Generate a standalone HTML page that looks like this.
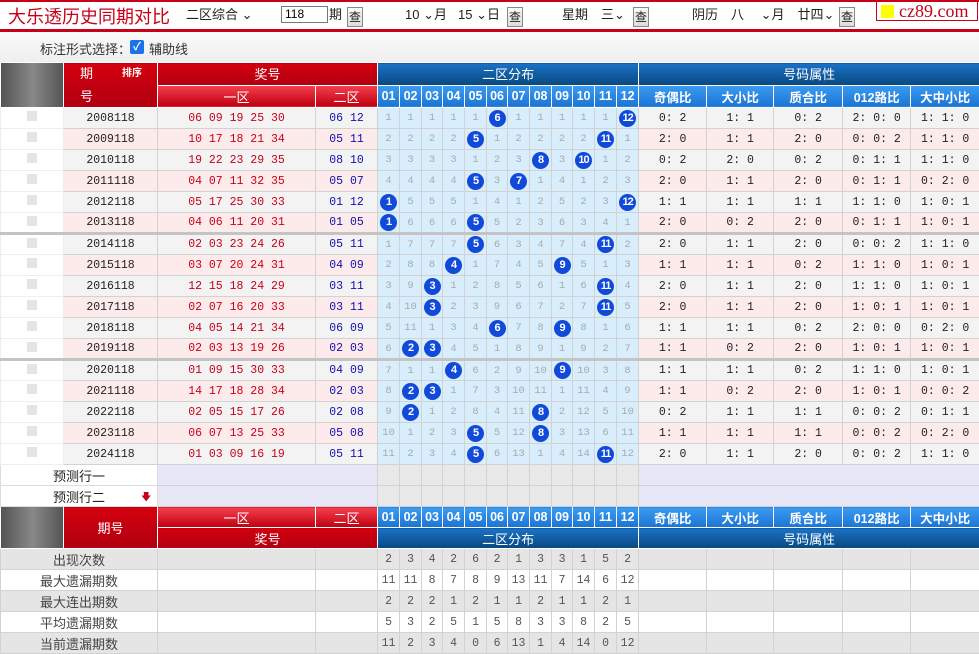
<!DOCTYPE html>
<html><head><meta charset="utf-8">
<style>
*{margin:0;padding:0;box-sizing:border-box}
body{width:979px;height:654px;overflow:hidden;background:#fff;font-family:"Liberation Sans","Noto Sans CJK SC",sans-serif;position:relative}
.top{position:absolute;left:0;top:0;width:979px;height:32px;border-top:2px solid #c8001a;border-bottom:3px solid #c8001a;background:#fff}
.title{position:absolute;left:8px;top:4px;font-size:18px;line-height:22px;color:#c8001a;white-space:nowrap}
.tt{position:absolute;top:5px;font-size:13px;line-height:16px;color:#222;white-space:nowrap}
.btn{position:absolute;top:5px;width:16px;height:20px;border:1px solid #888;background:linear-gradient(#fafafa,#ddd);font-size:12px;text-align:center;line-height:18px;color:#222}
.inp{position:absolute;left:281px;top:4px;width:47px;height:17px;border:1px solid #777;font-size:12px;padding-left:3px;line-height:15px}
.logo{position:absolute;left:876px;top:1px;width:102px;height:20px;border:1px solid #c8001a;background:#fff;font-family:"Liberation Serif",serif;font-size:18px;color:#c8001a;line-height:18px;padding-left:22px}
.logo b{position:absolute;left:4px;top:3px;width:13px;height:13px;background:#ff0}
.bar2{position:absolute;left:0;top:32px;width:979px;height:30px;background:linear-gradient(#fafafa,#efefef);font-size:13px;color:#333}
.cb{position:absolute;left:130px;top:8px;width:14px;height:14px;background:#1a73e8;border-radius:2px;color:#fff;font-size:11px;line-height:14px;text-align:center;font-weight:bold}
table{position:absolute;left:0;border-collapse:collapse;table-layout:fixed;width:979px}
td{border:1px solid #d2d2d2;height:21px;padding:0;text-align:center;font-size:11.5px;overflow:hidden;white-space:nowrap;color:#222;font-family:"Liberation Mono","Noto Sans CJK SC",monospace}
.hr{background:linear-gradient(#d4000f,#b00010);color:#fff;font-family:"Liberation Sans","Noto Sans CJK SC",sans-serif;font-size:13px;border-color:#fff}
.hr2{background:linear-gradient(#f54050,#c0000e);color:#fff;font-family:"Liberation Sans","Noto Sans CJK SC",sans-serif;font-size:13px;border-color:#fff}
.hb2{background:linear-gradient(#3b9cf0,#1b74d4);color:#fff;font-family:"Liberation Sans","Noto Sans CJK SC",sans-serif;font-size:12.5px;font-weight:bold;border-color:#fff}
.hbd{background:linear-gradient(#1a72c6,#08487f);color:#fff;font-family:"Liberation Sans","Noto Sans CJK SC",sans-serif;font-size:13px;border-color:#fff}
.dk{background:linear-gradient(90deg,#555,#888 50%,#555);border-color:#fff}
.ph{background:#fff;border-color:#eee}
.ph span{display:inline-block;width:10px;height:10px;background:#e4e4e4}
tr.g td{background:#f3f3f3}
tr.p td{background:#fdeaea}
tr.g td.ph,tr.p td.ph{background:#fff}
td.red{color:#c8001a}
td.blu{color:#1010b0}
tr td.b{background:#d8eefc;color:#aaa;font-size:10.5px}
td.b i{display:inline-block;width:17px;height:17px;border-radius:50%;background:#1149d8;color:#fff;font-style:normal;font-weight:bold;font-size:11px;line-height:17px;font-family:"Liberation Sans",sans-serif;letter-spacing:-1px}
tr.sep td{border-top:3px solid #c4c4c4}
.pr td{background:#e6e6f6;height:21px}
.pr td.pl{background:#fff;font-family:"Liberation Sans","Noto Sans CJK SC",sans-serif;font-size:13px;text-align:center;border-color:#ddd;position:relative}
.pr td.pg{background:#e8e8e8}
.st td{background:#e5e5e5;color:#555;font-size:11.5px}
.st.w td{background:#fff}
.st td.sl{font-family:"Liberation Sans","Noto Sans CJK SC",sans-serif;font-size:13px;color:#444}
</style></head><body>
<div class="top">
<div class="title">大乐透历史同期对比</div>
<div class="tt" style="left:186px">二区综合 ⌄</div>
<div class="inp">118</div>
<div class="tt" style="left:329px">期</div>
<div class="btn" style="left:347px">查</div>
<div class="tt" style="left:405px">10 ⌄月</div>
<div class="tt" style="left:458px">15 ⌄日</div>
<div class="btn" style="left:507px">查</div>
<div class="tt" style="left:562px">星期　三⌄</div>
<div class="btn" style="left:633px">查</div>
<div class="tt" style="left:692px">阴历　八　 ⌄月　廿四⌄</div>
<div class="btn" style="left:839px">查</div>
</div>
<div class="logo"><b></b>cz89.com</div>
<div class="bar2"><span style="position:absolute;left:40px;top:7px">标注形式选择：</span><div class="cb">✓</div><span style="position:absolute;left:149px;top:7px">辅助线</span></div>

<table style="top:62px">
<colgroup><col style="width:63px"><col style="width:94px"><col style="width:158px"><col style="width:62px">
<col style="width:22px"><col style="width:22px"><col style="width:21px"><col style="width:22px"><col style="width:22px"><col style="width:21px"><col style="width:22px"><col style="width:22px"><col style="width:21px"><col style="width:22px"><col style="width:22px"><col style="width:22px">
<col style="width:68px"><col style="width:67px"><col style="width:69px"><col style="width:68px"><col style="width:69px"></colgroup>
<tr><td class="dk" rowspan="2"></td><td class="hr" rowspan="2" style="text-align:left;padding-left:16px;line-height:21px">期　<span style="font-size:10px;font-weight:bold;position:relative;left:16px;top:-2px">排序</span><br>号</td><td class="hr" colspan="2">奖号</td><td class="hbd" colspan="12">二区分布</td><td class="hbd" colspan="5">号码属性</td></tr>
<tr><td class="hr2">一区</td><td class="hr2">二区</td><td class="hb2">01</td><td class="hb2">02</td><td class="hb2">03</td><td class="hb2">04</td><td class="hb2">05</td><td class="hb2">06</td><td class="hb2">07</td><td class="hb2">08</td><td class="hb2">09</td><td class="hb2">10</td><td class="hb2">11</td><td class="hb2">12</td><td class="hb2">奇偶比</td><td class="hb2">大小比</td><td class="hb2">质合比</td><td class="hb2">012路比</td><td class="hb2">大中小比</td></tr>
<tr class="g"><td class="ph"><span></span></td><td>2008118</td><td class="red">06&nbsp;09&nbsp;19&nbsp;25&nbsp;30</td><td class="blu">06&nbsp;12</td><td class="b">1</td><td class="b">1</td><td class="b">1</td><td class="b">1</td><td class="b">1</td><td class="b"><i>6</i></td><td class="b">1</td><td class="b">1</td><td class="b">1</td><td class="b">1</td><td class="b">1</td><td class="b"><i>12</i></td><td>0:&nbsp;2</td><td>1:&nbsp;1</td><td>0:&nbsp;2</td><td>2:&nbsp;0:&nbsp;0</td><td>1:&nbsp;1:&nbsp;0</td></tr>
<tr class="p"><td class="ph"><span></span></td><td>2009118</td><td class="red">10&nbsp;17&nbsp;18&nbsp;21&nbsp;34</td><td class="blu">05&nbsp;11</td><td class="b">2</td><td class="b">2</td><td class="b">2</td><td class="b">2</td><td class="b"><i>5</i></td><td class="b">1</td><td class="b">2</td><td class="b">2</td><td class="b">2</td><td class="b">2</td><td class="b"><i>11</i></td><td class="b">1</td><td>2:&nbsp;0</td><td>1:&nbsp;1</td><td>2:&nbsp;0</td><td>0:&nbsp;0:&nbsp;2</td><td>1:&nbsp;1:&nbsp;0</td></tr>
<tr class="g"><td class="ph"><span></span></td><td>2010118</td><td class="red">19&nbsp;22&nbsp;23&nbsp;29&nbsp;35</td><td class="blu">08&nbsp;10</td><td class="b">3</td><td class="b">3</td><td class="b">3</td><td class="b">3</td><td class="b">1</td><td class="b">2</td><td class="b">3</td><td class="b"><i>8</i></td><td class="b">3</td><td class="b"><i>10</i></td><td class="b">1</td><td class="b">2</td><td>0:&nbsp;2</td><td>2:&nbsp;0</td><td>0:&nbsp;2</td><td>0:&nbsp;1:&nbsp;1</td><td>1:&nbsp;1:&nbsp;0</td></tr>
<tr class="p"><td class="ph"><span></span></td><td>2011118</td><td class="red">04&nbsp;07&nbsp;11&nbsp;32&nbsp;35</td><td class="blu">05&nbsp;07</td><td class="b">4</td><td class="b">4</td><td class="b">4</td><td class="b">4</td><td class="b"><i>5</i></td><td class="b">3</td><td class="b"><i>7</i></td><td class="b">1</td><td class="b">4</td><td class="b">1</td><td class="b">2</td><td class="b">3</td><td>2:&nbsp;0</td><td>1:&nbsp;1</td><td>2:&nbsp;0</td><td>0:&nbsp;1:&nbsp;1</td><td>0:&nbsp;2:&nbsp;0</td></tr>
<tr class="g"><td class="ph"><span></span></td><td>2012118</td><td class="red">05&nbsp;17&nbsp;25&nbsp;30&nbsp;33</td><td class="blu">01&nbsp;12</td><td class="b"><i>1</i></td><td class="b">5</td><td class="b">5</td><td class="b">5</td><td class="b">1</td><td class="b">4</td><td class="b">1</td><td class="b">2</td><td class="b">5</td><td class="b">2</td><td class="b">3</td><td class="b"><i>12</i></td><td>1:&nbsp;1</td><td>1:&nbsp;1</td><td>1:&nbsp;1</td><td>1:&nbsp;1:&nbsp;0</td><td>1:&nbsp;0:&nbsp;1</td></tr>
<tr class="p"><td class="ph"><span></span></td><td>2013118</td><td class="red">04&nbsp;06&nbsp;11&nbsp;20&nbsp;31</td><td class="blu">01&nbsp;05</td><td class="b"><i>1</i></td><td class="b">6</td><td class="b">6</td><td class="b">6</td><td class="b"><i>5</i></td><td class="b">5</td><td class="b">2</td><td class="b">3</td><td class="b">6</td><td class="b">3</td><td class="b">4</td><td class="b">1</td><td>2:&nbsp;0</td><td>0:&nbsp;2</td><td>2:&nbsp;0</td><td>0:&nbsp;1:&nbsp;1</td><td>1:&nbsp;0:&nbsp;1</td></tr>
<tr class="g sep"><td class="ph"><span></span></td><td>2014118</td><td class="red">02&nbsp;03&nbsp;23&nbsp;24&nbsp;26</td><td class="blu">05&nbsp;11</td><td class="b">1</td><td class="b">7</td><td class="b">7</td><td class="b">7</td><td class="b"><i>5</i></td><td class="b">6</td><td class="b">3</td><td class="b">4</td><td class="b">7</td><td class="b">4</td><td class="b"><i>11</i></td><td class="b">2</td><td>2:&nbsp;0</td><td>1:&nbsp;1</td><td>2:&nbsp;0</td><td>0:&nbsp;0:&nbsp;2</td><td>1:&nbsp;1:&nbsp;0</td></tr>
<tr class="p"><td class="ph"><span></span></td><td>2015118</td><td class="red">03&nbsp;07&nbsp;20&nbsp;24&nbsp;31</td><td class="blu">04&nbsp;09</td><td class="b">2</td><td class="b">8</td><td class="b">8</td><td class="b"><i>4</i></td><td class="b">1</td><td class="b">7</td><td class="b">4</td><td class="b">5</td><td class="b"><i>9</i></td><td class="b">5</td><td class="b">1</td><td class="b">3</td><td>1:&nbsp;1</td><td>1:&nbsp;1</td><td>0:&nbsp;2</td><td>1:&nbsp;1:&nbsp;0</td><td>1:&nbsp;0:&nbsp;1</td></tr>
<tr class="g"><td class="ph"><span></span></td><td>2016118</td><td class="red">12&nbsp;15&nbsp;18&nbsp;24&nbsp;29</td><td class="blu">03&nbsp;11</td><td class="b">3</td><td class="b">9</td><td class="b"><i>3</i></td><td class="b">1</td><td class="b">2</td><td class="b">8</td><td class="b">5</td><td class="b">6</td><td class="b">1</td><td class="b">6</td><td class="b"><i>11</i></td><td class="b">4</td><td>2:&nbsp;0</td><td>1:&nbsp;1</td><td>2:&nbsp;0</td><td>1:&nbsp;1:&nbsp;0</td><td>1:&nbsp;0:&nbsp;1</td></tr>
<tr class="p"><td class="ph"><span></span></td><td>2017118</td><td class="red">02&nbsp;07&nbsp;16&nbsp;20&nbsp;33</td><td class="blu">03&nbsp;11</td><td class="b">4</td><td class="b">10</td><td class="b"><i>3</i></td><td class="b">2</td><td class="b">3</td><td class="b">9</td><td class="b">6</td><td class="b">7</td><td class="b">2</td><td class="b">7</td><td class="b"><i>11</i></td><td class="b">5</td><td>2:&nbsp;0</td><td>1:&nbsp;1</td><td>2:&nbsp;0</td><td>1:&nbsp;0:&nbsp;1</td><td>1:&nbsp;0:&nbsp;1</td></tr>
<tr class="g"><td class="ph"><span></span></td><td>2018118</td><td class="red">04&nbsp;05&nbsp;14&nbsp;21&nbsp;34</td><td class="blu">06&nbsp;09</td><td class="b">5</td><td class="b">11</td><td class="b">1</td><td class="b">3</td><td class="b">4</td><td class="b"><i>6</i></td><td class="b">7</td><td class="b">8</td><td class="b"><i>9</i></td><td class="b">8</td><td class="b">1</td><td class="b">6</td><td>1:&nbsp;1</td><td>1:&nbsp;1</td><td>0:&nbsp;2</td><td>2:&nbsp;0:&nbsp;0</td><td>0:&nbsp;2:&nbsp;0</td></tr>
<tr class="p"><td class="ph"><span></span></td><td>2019118</td><td class="red">02&nbsp;03&nbsp;13&nbsp;19&nbsp;26</td><td class="blu">02&nbsp;03</td><td class="b">6</td><td class="b"><i>2</i></td><td class="b"><i>3</i></td><td class="b">4</td><td class="b">5</td><td class="b">1</td><td class="b">8</td><td class="b">9</td><td class="b">1</td><td class="b">9</td><td class="b">2</td><td class="b">7</td><td>1:&nbsp;1</td><td>0:&nbsp;2</td><td>2:&nbsp;0</td><td>1:&nbsp;0:&nbsp;1</td><td>1:&nbsp;0:&nbsp;1</td></tr>
<tr class="g sep"><td class="ph"><span></span></td><td>2020118</td><td class="red">01&nbsp;09&nbsp;15&nbsp;30&nbsp;33</td><td class="blu">04&nbsp;09</td><td class="b">7</td><td class="b">1</td><td class="b">1</td><td class="b"><i>4</i></td><td class="b">6</td><td class="b">2</td><td class="b">9</td><td class="b">10</td><td class="b"><i>9</i></td><td class="b">10</td><td class="b">3</td><td class="b">8</td><td>1:&nbsp;1</td><td>1:&nbsp;1</td><td>0:&nbsp;2</td><td>1:&nbsp;1:&nbsp;0</td><td>1:&nbsp;0:&nbsp;1</td></tr>
<tr class="p"><td class="ph"><span></span></td><td>2021118</td><td class="red">14&nbsp;17&nbsp;18&nbsp;28&nbsp;34</td><td class="blu">02&nbsp;03</td><td class="b">8</td><td class="b"><i>2</i></td><td class="b"><i>3</i></td><td class="b">1</td><td class="b">7</td><td class="b">3</td><td class="b">10</td><td class="b">11</td><td class="b">1</td><td class="b">11</td><td class="b">4</td><td class="b">9</td><td>1:&nbsp;1</td><td>0:&nbsp;2</td><td>2:&nbsp;0</td><td>1:&nbsp;0:&nbsp;1</td><td>0:&nbsp;0:&nbsp;2</td></tr>
<tr class="g"><td class="ph"><span></span></td><td>2022118</td><td class="red">02&nbsp;05&nbsp;15&nbsp;17&nbsp;26</td><td class="blu">02&nbsp;08</td><td class="b">9</td><td class="b"><i>2</i></td><td class="b">1</td><td class="b">2</td><td class="b">8</td><td class="b">4</td><td class="b">11</td><td class="b"><i>8</i></td><td class="b">2</td><td class="b">12</td><td class="b">5</td><td class="b">10</td><td>0:&nbsp;2</td><td>1:&nbsp;1</td><td>1:&nbsp;1</td><td>0:&nbsp;0:&nbsp;2</td><td>0:&nbsp;1:&nbsp;1</td></tr>
<tr class="p"><td class="ph"><span></span></td><td>2023118</td><td class="red">06&nbsp;07&nbsp;13&nbsp;25&nbsp;33</td><td class="blu">05&nbsp;08</td><td class="b">10</td><td class="b">1</td><td class="b">2</td><td class="b">3</td><td class="b"><i>5</i></td><td class="b">5</td><td class="b">12</td><td class="b"><i>8</i></td><td class="b">3</td><td class="b">13</td><td class="b">6</td><td class="b">11</td><td>1:&nbsp;1</td><td>1:&nbsp;1</td><td>1:&nbsp;1</td><td>0:&nbsp;0:&nbsp;2</td><td>0:&nbsp;2:&nbsp;0</td></tr>
<tr class="g"><td class="ph"><span></span></td><td>2024118</td><td class="red">01&nbsp;03&nbsp;09&nbsp;16&nbsp;19</td><td class="blu">05&nbsp;11</td><td class="b">11</td><td class="b">2</td><td class="b">3</td><td class="b">4</td><td class="b"><i>5</i></td><td class="b">6</td><td class="b">13</td><td class="b">1</td><td class="b">4</td><td class="b">14</td><td class="b"><i>11</i></td><td class="b">12</td><td>2:&nbsp;0</td><td>1:&nbsp;1</td><td>2:&nbsp;0</td><td>0:&nbsp;0:&nbsp;2</td><td>1:&nbsp;1:&nbsp;0</td></tr>
<tr class="pr"><td class="pl" colspan="2">预测行一</td><td colspan="2"></td><td class="pg"></td><td class="pg"></td><td class="pg"></td><td class="pg"></td><td class="pg"></td><td class="pg"></td><td class="pg"></td><td class="pg"></td><td class="pg"></td><td class="pg"></td><td class="pg"></td><td class="pg"></td><td colspan="5"></td></tr>
<tr class="pr"><td class="pl" colspan="2">预测行二<span style="color:#c8001a;font-size:10px;position:absolute;left:140px;top:4px">🡇</span></td><td colspan="2"></td><td class="pg"></td><td class="pg"></td><td class="pg"></td><td class="pg"></td><td class="pg"></td><td class="pg"></td><td class="pg"></td><td class="pg"></td><td class="pg"></td><td class="pg"></td><td class="pg"></td><td class="pg"></td><td colspan="5"></td></tr>
<tr><td class="dk" rowspan="2"></td><td class="hr" rowspan="2">期号</td><td class="hr2">一区</td><td class="hr2">二区</td><td class="hb2">01</td><td class="hb2">02</td><td class="hb2">03</td><td class="hb2">04</td><td class="hb2">05</td><td class="hb2">06</td><td class="hb2">07</td><td class="hb2">08</td><td class="hb2">09</td><td class="hb2">10</td><td class="hb2">11</td><td class="hb2">12</td><td class="hb2">奇偶比</td><td class="hb2">大小比</td><td class="hb2">质合比</td><td class="hb2">012路比</td><td class="hb2">大中小比</td></tr>
<tr><td class="hr" colspan="2">奖号</td><td class="hbd" colspan="12">二区分布</td><td class="hbd" colspan="5">号码属性</td></tr>
<tr class="st"><td class="sl" colspan="2">出现次数</td><td></td><td></td><td>2</td><td>3</td><td>4</td><td>2</td><td>6</td><td>2</td><td>1</td><td>3</td><td>3</td><td>1</td><td>5</td><td>2</td><td></td><td></td><td></td><td></td><td></td></tr>
<tr class="st w"><td class="sl" colspan="2">最大遗漏期数</td><td></td><td></td><td>11</td><td>11</td><td>8</td><td>7</td><td>8</td><td>9</td><td>13</td><td>11</td><td>7</td><td>14</td><td>6</td><td>12</td><td></td><td></td><td></td><td></td><td></td></tr>
<tr class="st"><td class="sl" colspan="2">最大连出期数</td><td></td><td></td><td>2</td><td>2</td><td>2</td><td>1</td><td>2</td><td>1</td><td>1</td><td>2</td><td>1</td><td>1</td><td>2</td><td>1</td><td></td><td></td><td></td><td></td><td></td></tr>
<tr class="st w"><td class="sl" colspan="2">平均遗漏期数</td><td></td><td></td><td>5</td><td>3</td><td>2</td><td>5</td><td>1</td><td>5</td><td>8</td><td>3</td><td>3</td><td>8</td><td>2</td><td>5</td><td></td><td></td><td></td><td></td><td></td></tr>
<tr class="st"><td class="sl" colspan="2">当前遗漏期数</td><td></td><td></td><td>11</td><td>2</td><td>3</td><td>4</td><td>0</td><td>6</td><td>13</td><td>1</td><td>4</td><td>14</td><td>0</td><td>12</td><td></td><td></td><td></td><td></td><td></td></tr>
</table>
</body></html>
